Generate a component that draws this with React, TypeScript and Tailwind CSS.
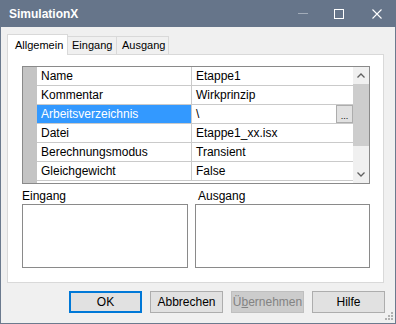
const ROWS = [
  { name: "Name", value: "Etappe1" },
  { name: "Kommentar", value: "Wirkprinzip" },
  { name: "Arbeitsverzeichnis", value: "\\", selected: true },
  { name: "Datei", value: "Etappe1_xx.isx" },
  { name: "Berechnungsmodus", value: "Transient" },
  { name: "Gleichgewicht", value: "False" },
];

function Chevron({ down }: { down?: boolean }) {
  return (
    <svg width="8" height="5" viewBox="0 0 8 5" className="text-[#606060]">
      <path
        d={down ? "M0.5 0.5 L4 4 L7.5 0.5" : "M0.5 4.5 L4 1 L7.5 4.5"}
        fill="none"
        stroke="currentColor"
        strokeWidth="1.3"
      />
    </svg>
  );
}

export default function App() {
  return (
    <div className="w-[396px] h-[324px] flex flex-col bg-[#f0f0f0] font-['Liberation_Sans',Arial,sans-serif] text-[12px] text-black">
      {/* title bar */}
      <div className="h-[27px] shrink-0 bg-[#66758a] flex items-center pl-[9px] pr-[14px]">
        <span className="font-bold text-white text-[12px]">SimulationX</span>
        <span className="ml-auto w-[10px] h-px bg-[#a2acb9]" />
        <span className="ml-[26px] w-[10px] h-[10px] border border-white" />
        <svg width="10" height="10" viewBox="0 0 10 10" className="ml-[28px]">
          <path d="M0.5 0.5 L9.5 9.5 M9.5 0.5 L0.5 9.5" stroke="white" strokeWidth="1.1" />
        </svg>
      </div>

      {/* body */}
      <div className="relative flex-1 flex flex-col border-x border-b border-[#6b7a8e] pl-[6px] pt-[7px]">
        {/* tabs */}
        <div className="flex items-end h-[20px] text-[11px] whitespace-nowrap">
          <div className="relative z-10 -mb-px h-[21px] w-[61px] bg-white border-x border-t border-[#d9d9d9] flex items-center pl-[7px]">
            Allgemein
          </div>
          <div className="h-[18px] w-[49px] border-t border-r border-[#d9d9d9] flex items-center pl-[4px]">
            Eingang
          </div>
          <div className="h-[18px] w-[52px] border-t border-r border-[#d9d9d9] flex items-center pl-[5px]">
            Ausgang
          </div>
        </div>

        {/* panel */}
        <div className="w-[377px] h-[229px] bg-white border border-[#d9d9d9] pl-[14px] pt-[11px]">
          <div className="w-[348px] border border-[#8a8a8a] flex">
            <div className="w-[14px] bg-[#c4c4c4]" />
            <div className="w-[316px] h-[116px]">
              {ROWS.map(r => (
                <div key={r.name} className="h-[19px] flex border-b border-[#cacaca]">
                  <div
                    className={`w-[155px] border-r border-[#cacaca] pl-[4px] flex items-center ${
                      r.selected ? "bg-[#3399ff] text-white" : ""
                    }`}
                  >
                    {r.name}
                  </div>
                  <div className="flex-1 flex items-center pl-[4px]">
                    <span className="flex-1">{r.value}</span>
                    {r.selected && (
                      <span className="w-[17px] h-[18px] bg-[#e1e1e1] border border-[#adadad] flex items-end justify-center text-[9px] leading-[12px]">
                        ...
                      </span>
                    )}
                  </div>
                </div>
              ))}
            </div>
            <div className="w-[16px] bg-[#f0f0f0] flex flex-col">
              <div className="h-[17px] flex items-center justify-center">
                <Chevron />
              </div>
              <div className="h-[62px] bg-[#cdcdcd]" />
              <div className="flex-1" />
              <div className="h-[17px] flex items-center justify-center">
                <Chevron down />
              </div>
            </div>
          </div>

          <div className="flex gap-[7px] mt-[5px]">
            <div className="w-[166px]">
              <div className="h-[15px] leading-[15px]">Eingang</div>
              <div className="h-[64px] border border-[#8a8a8a]" />
            </div>
            <div className="w-[175px]">
              <div className="h-[15px] leading-[15px] pl-[3px]">Ausgang</div>
              <div className="h-[64px] border border-[#8a8a8a]" />
            </div>
          </div>
        </div>

        {/* buttons */}
        <div className="flex justify-end gap-[8px] mt-[8px] pr-[10px]">
          <button className="w-[73px] h-[22px] bg-[#e1e1e1] border-2 border-[#0078d7]">OK</button>
          <button className="w-[73px] h-[22px] bg-[#e1e1e1] border border-[#adadad]">Abbrechen</button>
          <button className="w-[73px] h-[22px] bg-[#cccccc] border border-[#bfbfbf] text-[#838383]">
            Ü<u>b</u>ernehmen
          </button>
          <button className="w-[73px] h-[22px] bg-[#e1e1e1] border border-[#adadad]">Hilfe</button>
        </div>

        {/* resize grip */}
        <svg width="8" height="8" viewBox="0 0 8 8" className="absolute right-[2px] bottom-[3px]">
          <g fill="#b0b0b0">
            <rect x="6" y="0" width="2" height="2" />
            <rect x="3" y="3" width="2" height="2" />
            <rect x="6" y="3" width="2" height="2" />
            <rect x="0" y="6" width="2" height="2" />
            <rect x="3" y="6" width="2" height="2" />
            <rect x="6" y="6" width="2" height="2" />
          </g>
        </svg>
      </div>
    </div>
  );
}
